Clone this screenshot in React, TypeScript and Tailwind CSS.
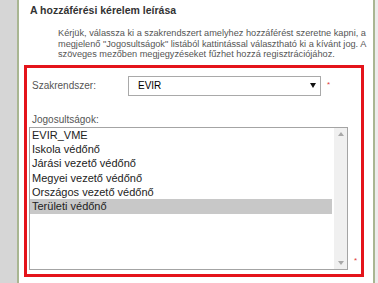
import React from "react";

const items = [
  "EVIR_VME",
  "Iskola védőnő",
  "Járási vezető védőnő",
  "Megyei vezető védőnő",
  "Országos vezető védőnő",
  "Területi védőnő",
];

export default function App() {
  return (
    <div className="w-[378px] h-[283px] flex overflow-hidden bg-white font-['Liberation_Sans',Arial,sans-serif]">
      <div className="w-[17px] shrink-0 bg-[#d6d6d6]" />
      <div className="flex-1 flex flex-col border-l-2 border-r-2 border-[#a9b692] bg-white">
        <div className="pt-[3px] pl-[11px] text-[10.5px] leading-[14px] font-bold text-[#333]">
          A hozzáférési kérelem leírása
        </div>
        <div className="mt-[11px] pl-[39px] text-[9.2px] leading-[10.5px] text-[#555] whitespace-nowrap">
          <div>Kérjük, válassza ki a szakrendszert amelyhez hozzáférést szeretne kapni, a</div>
          <div>megjelenő "Jogosultságok" listából kattintással választható ki a kívánt jog. A</div>
          <div>szöveges mezőben megjegyzéseket fűzhet hozzá regisztrációjához.</div>
        </div>
        <div className="mt-[5px] ml-[5px] w-[340px] h-[212px] border-[3px] border-[#e4141b] flex flex-col">
          <div className="mt-[8px] flex items-center">
            <div className="pl-[5px] w-[101px] text-[10px] leading-[12px] text-[#555]">Szakrendszer:</div>
            <div className="w-[193px] h-[20px] border border-[#a9a9a9] bg-white flex items-center pl-[9px] pr-[4px]">
              <span className="flex-1 text-[10px] text-black">EVIR</span>
              <svg width="6" height="5" viewBox="0 0 6 5">
                <path d="M0 0 L6 0 L3 5 Z" fill="#111" />
              </svg>
            </div>
            <span className="ml-[6px] text-[8px] leading-[8px] text-[#e03a3a] -mt-[2px]">*</span>
          </div>
          <div className="mt-[18px] pl-[5px] text-[10px] leading-[12px] text-[#555]">Jogosultságok:</div>
          <div className="mt-[1px] flex items-end">
            <div className="ml-[2px] w-[319px] h-[143px] border border-[#a4a4a4] bg-white flex">
              <div className="flex-1 flex flex-col pr-[2px]">
                {items.map((it, i) => (
                  <div
                    key={it}
                    className={
                      i === 5
                        ? "h-[14.4px] leading-[14.4px] pl-[2px] text-[11px] text-[#222] bg-[#c8c8c8]"
                        : "h-[14.4px] leading-[14.4px] pl-[2px] text-[11px] text-[#222]"
                    }
                  >
                    {it}
                  </div>
                ))}
              </div>
              <div className="w-[13px] bg-[#f0f0f0] flex flex-col items-center justify-between py-[4px]">
                <svg width="6" height="4" viewBox="0 0 6 4">
                  <path d="M0 4 L6 4 L3 0 Z" fill="#a8a8a8" />
                </svg>
                <svg width="6" height="4" viewBox="0 0 6 4">
                  <path d="M0 0 L6 0 L3 4 Z" fill="#a8a8a8" />
                </svg>
              </div>
            </div>
            <span className="ml-[6px] mb-[5px] text-[8px] leading-[8px] text-[#e03a3a]">*</span>
          </div>
        </div>
      </div>
      <div className="w-[3px] shrink-0 bg-[#ececec]" />
    </div>
  );
}
